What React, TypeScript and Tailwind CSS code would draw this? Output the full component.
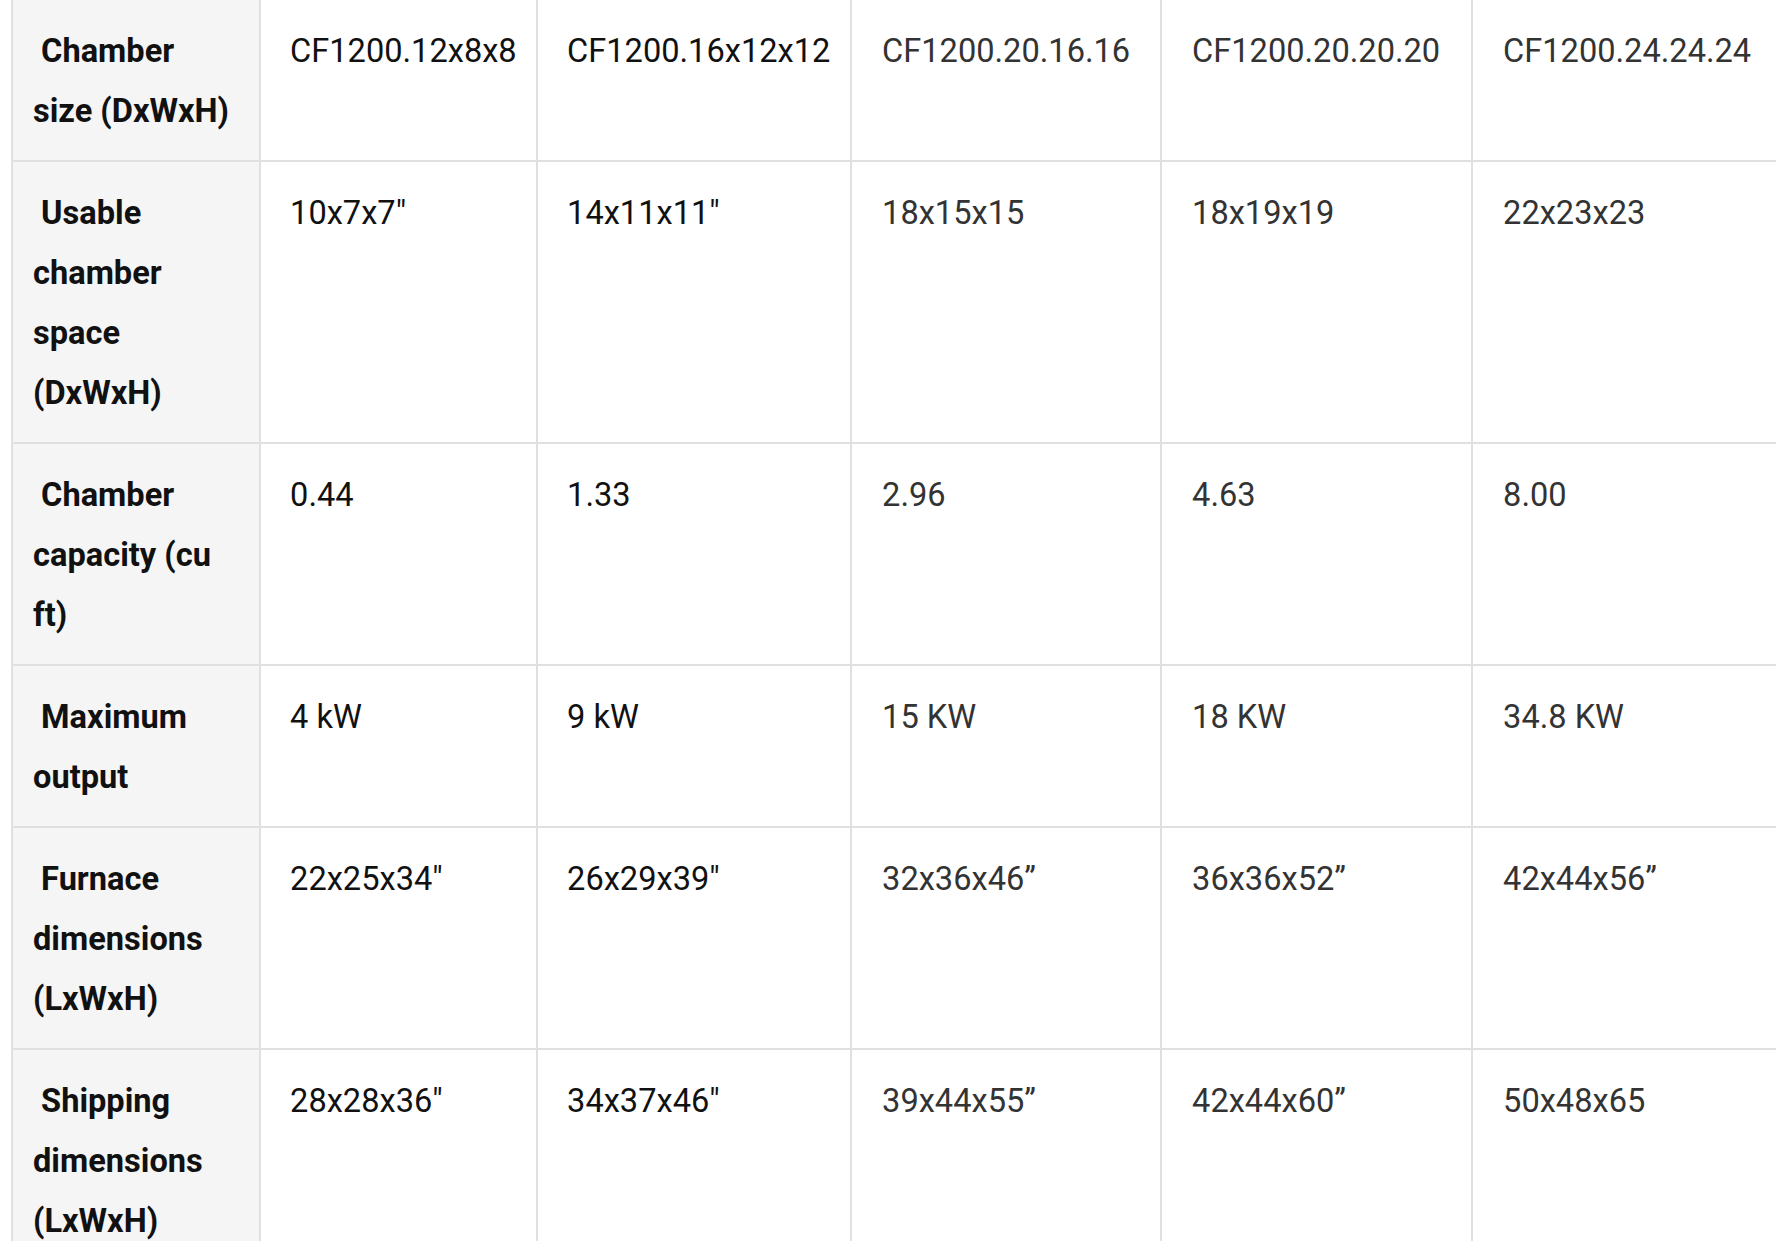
interface SpecRow {
  label: string;
  values: string[];
}

const rows: SpecRow[] = [
  {
    label: 'Chamber size (DxWxH)',
    values: ['CF1200.12x8x8', 'CF1200.16x12x12', 'CF1200.20.16.16', 'CF1200.20.20.20', 'CF1200.24.24.24'],
  },
  {
    label: 'Usable chamber space (DxWxH)',
    values: ['10x7x7"', '14x11x11"', '18x15x15', '18x19x19', '22x23x23'],
  },
  {
    label: 'Chamber capacity (cu ft)',
    values: ['0.44', '1.33', '2.96', '4.63', '8.00'],
  },
  {
    label: 'Maximum output',
    values: ['4 kW', '9 kW', '15 KW', '18 KW', '34.8 KW'],
  },
  {
    label: 'Furnace dimensions (LxWxH)',
    values: ['22x25x34"', '26x29x39"', '32x36x46\u201d', '36x36x52\u201d', '42x44x56\u201d'],
  },
  {
    label: 'Shipping dimensions (LxWxH)',
    values: ['28x28x36"', '34x37x46"', '39x44x55\u201d', '42x44x60\u201d', '50x48x65'],
  },
];

export default function App() {
  return (
    <div className="w-screen h-screen overflow-hidden bg-white">
      <table className="table-fixed border-separate border-spacing-0 ml-[11px] -mt-[2px] w-[1782px] font-[Roboto,sans-serif] text-[32.6px] leading-[60px]">
        <colgroup>
          <col className="w-[248px]" />
          <col className="w-[277px]" />
          <col className="w-[314px]" />
          <col className="w-[310px]" />
          <col className="w-[311px]" />
          <col className="w-[322px]" />
        </colgroup>
        <tbody>
          {rows.map((row) => (
            <tr key={row.label}>
              {/* Label column */}
              <td className="align-top border-l-2 border-t-2 border-[#e0e0e0] bg-[#f5f5f5] pl-5 pr-7 pt-[21px] pb-[19px] font-bold text-[#111]">
                {'\u00a0' + row.label}
              </td>
              {row.values.map((value, i) => (
                <td
                  key={i}
                  className={`align-top border-l-2 border-t-2 border-[#e0e0e0] pr-5 pt-[21px] pb-[19px] whitespace-nowrap ${
                    i < 2 ? 'pl-[21px] text-[#111]' : 'pl-[22px] text-[#333]'
                  }`}
                >
                  {'\u00a0' + value}
                </td>
              ))}
            </tr>
          ))}
        </tbody>
      </table>
    </div>
  );
}
